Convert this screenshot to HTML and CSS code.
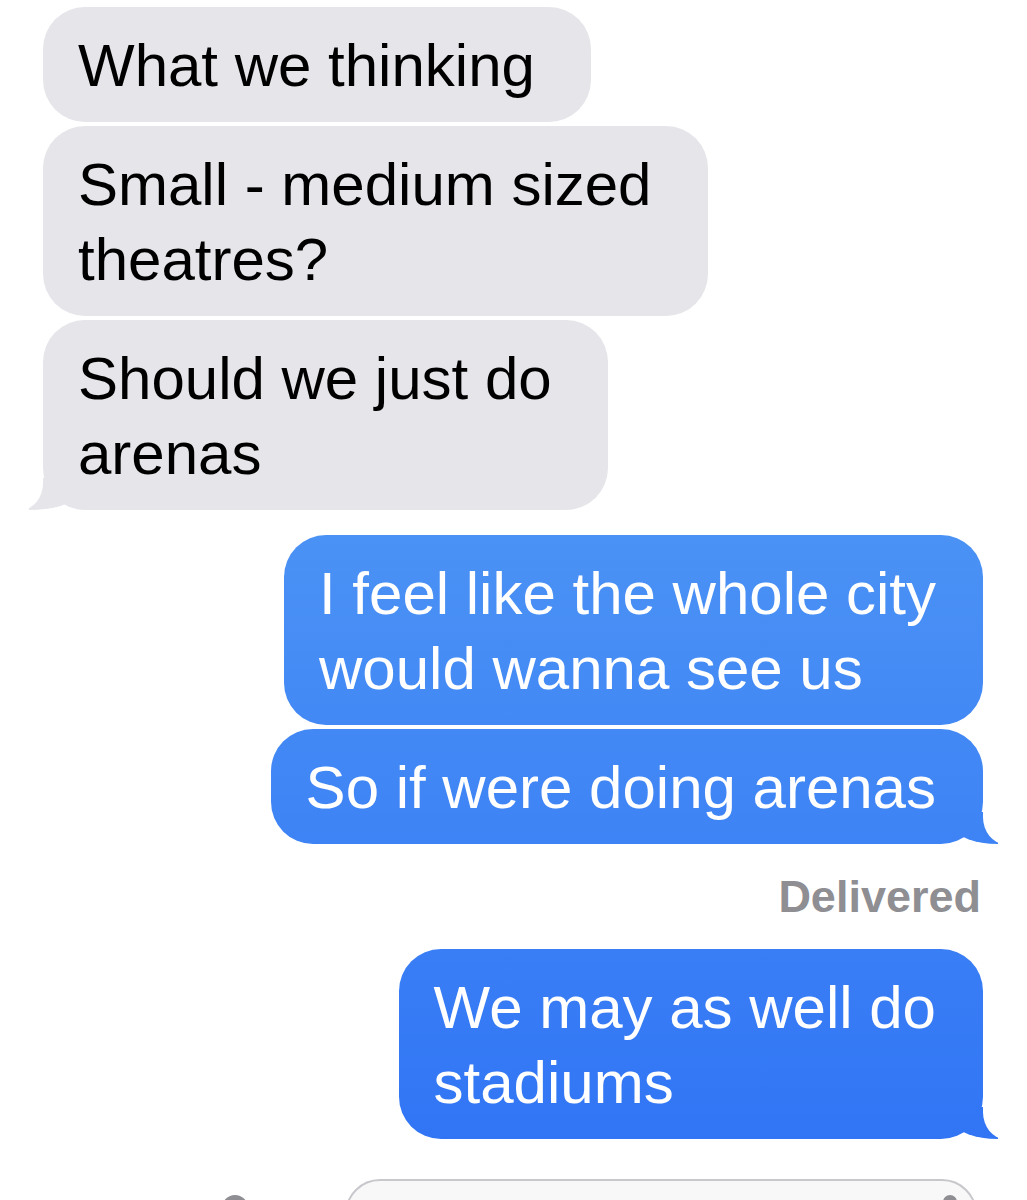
FILE: index.html
```html
<!DOCTYPE html>
<html lang="en">
<head>
<meta charset="utf-8">
<title>Messages</title>
<link rel="stylesheet" href="styles.css">
</head>
<body>
<main class="thread">
  <div class="bubble in">What we thinking</div>
  <div class="bubble in">Small - medium sized<br>theatres?</div>
  <div class="bubble in tail">Should we just do<br>arenas</div>
  <div class="bubble out group-start">I feel like the whole city<br>would wanna see us</div>
  <div class="bubble out tail">So if were doing arenas</div>
  <div class="status">Delivered</div>
  <div class="bubble out tail">We may as well do<br>stadiums</div>
  <div class="composer">
    <span class="apps-icon"></span>
    <div class="field">
      <span class="mic-icon"></span>
    </div>
  </div>
</main>
</body>
</html>
```

FILE: styles.css
```css
html, body {
  margin: 0;
  padding: 0;
  background: #ffffff;
}

body {
  height: 1200px;
  overflow: hidden;
  font-family: "Liberation Sans", Arial, sans-serif;
}

.thread {
  display: flex;
  flex-direction: column;
  gap: 4px;
  padding: 7px 44px 0 43px;
}

.bubble {
  position: relative;
  font-size: 60px;
  line-height: 75px;
  border-radius: 42px;
  white-space: nowrap;
}

.in {
  align-self: flex-start;
  background: #e5e5ea;
  color: #000;
  padding: 21px 56px 19px 35px;
}

.out {
  align-self: flex-end;
  color: #fff;
  background: linear-gradient(to bottom, #4b92f5 530px, #3175f5 1140px) fixed;
  padding: 21px 47px 19px 35px;
}

.group-start {
  margin-top: 21px;
}

/* received tail (bottom-left) */
.in.tail::before {
  content: "";
  position: absolute;
  left: -14px;
  bottom: 0;
  width: 42px;
  height: 32px;
  background: #e5e5ea;
  border-bottom-right-radius: 42px 12px;
}

.in.tail::after {
  content: "";
  position: absolute;
  left: -40px;
  bottom: 0;
  width: 40px;
  height: 34px;
  background: #fff;
  border-bottom-right-radius: 22px 27px;
}

/* sent tail (bottom-right) */
.out.tail::before {
  content: "";
  position: absolute;
  right: -15px;
  bottom: 0;
  width: 42px;
  height: 32px;
  background: linear-gradient(to bottom, #4b92f5 530px, #3175f5 1140px) fixed;
  border-bottom-left-radius: 42px 16px;
}

.out.tail::after {
  content: "";
  position: absolute;
  right: -40px;
  bottom: 0;
  width: 40px;
  height: 34px;
  background: #fff;
  border-bottom-left-radius: 22px 27px;
}

.status {
  align-self: flex-end;
  margin: 23px 2px 22px 0;
  font-size: 45px;
  line-height: 52px;
  font-weight: 700;
  color: #8e8e93;
}

.composer {
  display: flex;
  align-items: flex-start;
  margin-top: 36px;
  margin-left: 179px;
  height: 60px;
}

.apps-icon {
  margin-top: 16px;
  width: 26px;
  height: 26px;
  border-radius: 50%;
  background: #8e8e93;
}

.field {
  position: relative;
  margin-left: 97px;
  width: 632px;
  height: 70px;
  box-sizing: border-box;
  border: 2px solid #c7c7cc;
  border-radius: 40px;
  background: #f8f8f8;
}

.mic-icon {
  position: absolute;
  right: 18px;
  top: 14px;
  width: 14px;
  height: 20px;
  border-radius: 7px;
  background: #8e8e93;
}
```
